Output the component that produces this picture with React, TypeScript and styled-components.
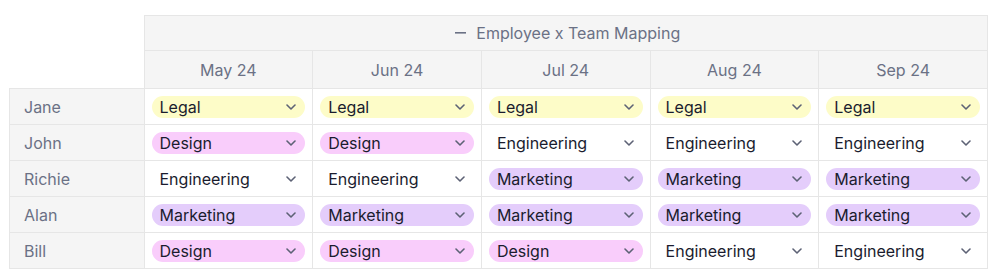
import React from "react";
import styled, { createGlobalStyle } from "styled-components";

type Team = "Legal" | "Design" | "Engineering" | "Marketing";

const teamColors: Record<Team, string> = {
  Legal: "#fdfcc8",
  Design: "#f9cdfb",
  Engineering: "transparent",
  Marketing: "#e4cdfb",
};

const months = ["May 24", "Jun 24", "Jul 24", "Aug 24", "Sep 24"];

const rows: { name: string; teams: Team[] }[] = [
  { name: "Jane", teams: ["Legal", "Legal", "Legal", "Legal", "Legal"] },
  { name: "John", teams: ["Design", "Design", "Engineering", "Engineering", "Engineering"] },
  { name: "Richie", teams: ["Engineering", "Engineering", "Marketing", "Marketing", "Marketing"] },
  { name: "Alan", teams: ["Marketing", "Marketing", "Marketing", "Marketing", "Marketing"] },
  { name: "Bill", teams: ["Design", "Design", "Design", "Engineering", "Engineering"] },
];

const GlobalStyle = createGlobalStyle`
  body {
    margin: 0;
    background: #ffffff;
    font-family: Inter, "Liberation Sans", sans-serif;
  }
`;

const Wrapper = styled.div`
  padding: 15px 0 0 9px;
`;

const Table = styled.table`
  border-collapse: collapse;
  table-layout: fixed;
  width: 979px;
  font-size: 16px;
  line-height: 20px;
`;

const Corner = styled.th`
  width: 134px;
  border: none;
  padding: 0;
`;

const GroupHead = styled.th`
  padding: 0;
  background: #f5f5f5;
  border: 1px solid #e6e6e6;
  color: #6b7185;
  font-weight: 400;
`;

const GroupLabel = styled.div`
  display: flex;
  align-items: center;
  justify-content: center;
  gap: 10px;
  height: 34px;
  padding-left: 4px;
`;

const MonthHead = styled.th`
  height: 37px;
  padding: 0;
  background: #f5f5f5;
  border: 1px solid #e6e6e6;
  color: #6b7185;
  font-weight: 400;
`;

const NameCell = styled.td`
  height: 35px;
  padding: 0 0 0 14px;
  background: #f5f5f5;
  border: 1px solid #e6e6e6;
  color: #6b7185;
`;

const ValueCell = styled.td`
  height: 35px;
  padding: 0 7px;
  border: 1px solid #e6e6e6;
`;

const Pill = styled.div<{ $bg: string }>`
  display: flex;
  align-items: center;
  justify-content: space-between;
  height: 22px;
  padding: 0 9px 0 8px;
  border-radius: 11px;
  background: ${(p) => p.$bg};
  color: #1a1c2e;
`;

const Chevron = () => (
  <svg width="10" height="6" viewBox="0 0 10 6" fill="none">
    <path d="M1 1l4 4 4-4" stroke="#5d6275" strokeWidth="1.6" strokeLinecap="round" strokeLinejoin="round" />
  </svg>
);

const Minus = () => (
  <svg width="11" height="2" viewBox="0 0 11 2">
    <rect width="11" height="1.6" fill="#6b7185" />
  </svg>
);

export default function App() {
  return (
    <>
      <GlobalStyle />
      <Wrapper>
        <Table>
          <thead>
            <tr>
              <Corner />
              <GroupHead colSpan={5}>
                <GroupLabel>
                  <Minus />
                  Employee x Team Mapping
                </GroupLabel>
              </GroupHead>
            </tr>
            <tr>
              <Corner />
              {months.map((m) => (
                <MonthHead key={m}>{m}</MonthHead>
              ))}
            </tr>
          </thead>
          <tbody>
            {rows.map((row) => (
              <tr key={row.name}>
                <NameCell>{row.name}</NameCell>
                {row.teams.map((team, i) => (
                  <ValueCell key={i}>
                    <Pill $bg={teamColors[team]}>
                      {team}
                      <Chevron />
                    </Pill>
                  </ValueCell>
                ))}
              </tr>
            ))}
          </tbody>
        </Table>
      </Wrapper>
    </>
  );
}
